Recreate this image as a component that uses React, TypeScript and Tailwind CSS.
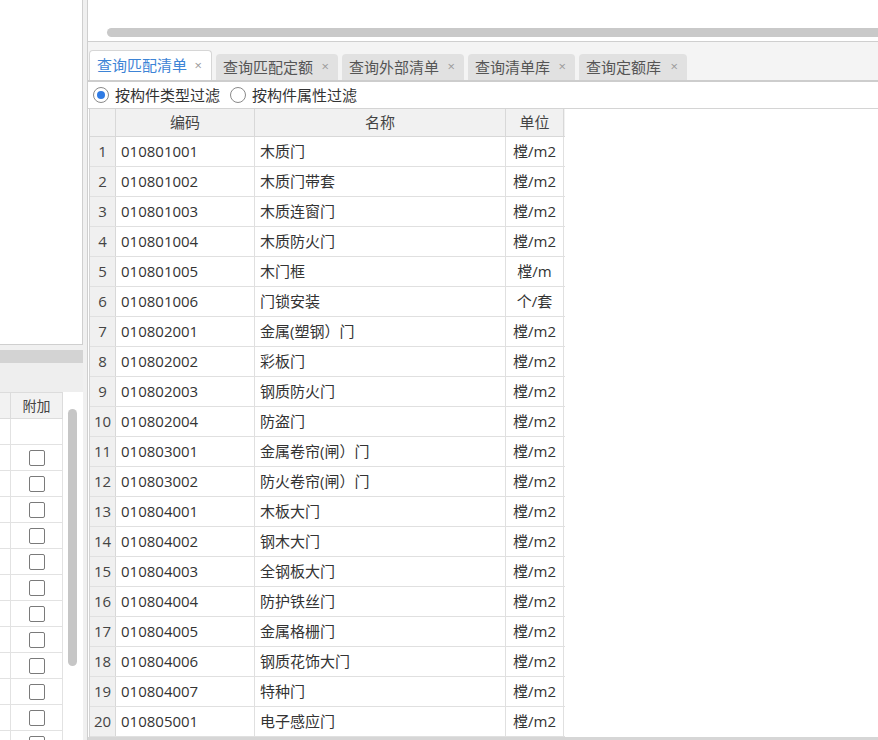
const rows: [string, string, string][] = [
  ["010801001", "木质门", "樘/m2"],
  ["010801002", "木质门带套", "樘/m2"],
  ["010801003", "木质连窗门", "樘/m2"],
  ["010801004", "木质防火门", "樘/m2"],
  ["010801005", "木门框", "樘/m"],
  ["010801006", "门锁安装", "个/套"],
  ["010802001", "金属(塑钢）门", "樘/m2"],
  ["010802002", "彩板门", "樘/m2"],
  ["010802003", "钢质防火门", "樘/m2"],
  ["010802004", "防盗门", "樘/m2"],
  ["010803001", "金属卷帘(闸）门", "樘/m2"],
  ["010803002", "防火卷帘(闸）门", "樘/m2"],
  ["010804001", "木板大门", "樘/m2"],
  ["010804002", "钢木大门", "樘/m2"],
  ["010804003", "全钢板大门", "樘/m2"],
  ["010804004", "防护铁丝门", "樘/m2"],
  ["010804005", "金属格栅门", "樘/m2"],
  ["010804006", "钢质花饰大门", "樘/m2"],
  ["010804007", "特种门", "樘/m2"],
  ["010805001", "电子感应门", "樘/m2"],
];

const tabs = [
  { label: "查询匹配清单", w: "w-[123px]", active: true },
  { label: "查询匹配定额", w: "w-[122px]" },
  { label: "查询外部清单", w: "w-[122px]" },
  { label: "查询清单库", w: "w-[107px]" },
  { label: "查询定额库", w: "w-[108px]" },
];

const LeftPanel = () => (
  <aside className="flex w-[83px] shrink-0 flex-col overflow-hidden">
    {/* upper empty pane */}
    <div className="h-[345px] shrink-0 border-r border-b border-[#cfcfcf] bg-white" />
    <div className="h-[5px] shrink-0" />
    <div className="h-[13px] shrink-0 bg-[#d3d3d3]" />
    <div className="h-[29px] shrink-0 bg-[#eeeeee]" />

    {/* 附加 column table */}
    <div className="flex min-h-0 flex-1 overflow-hidden bg-white">
      <div className="w-[63px]">
        <div className="flex h-[27px] border-y border-[#dcdcdc] bg-[#f2f2f2]">
          <div className="w-[11px] border-r border-[#dcdcdc]" />
          <div className="flex w-[52px] items-center justify-center border-r border-[#dcdcdc] text-[14px] text-[#444]">
            附加
          </div>
        </div>
        {Array.from({ length: 13 }).map((_, i) => (
          <div key={i} className="flex h-[26px] border-b border-[#e2e2e2]">
            <div className="w-[11px] border-r border-[#e2e2e2]" />
            <div className="flex w-[52px] items-center justify-center border-r border-[#e2e2e2]">
              {i > 0 && (
                <span className="h-[16px] w-[16px] rounded-[2px] border border-[#7a7a7a] bg-white" />
              )}
            </div>
          </div>
        ))}
      </div>
      <div className="flex-1 pt-[17px] pl-[5px]">
        <div className="h-[257px] w-[9px] rounded-full bg-[#c6c6c6]" />
      </div>
    </div>
  </aside>
);

const Radio = ({ checked, label }: { checked?: boolean; label: string }) => (
  <label className="flex items-center gap-[6px]">
    <span className="flex h-[16px] w-[16px] items-center justify-center rounded-full border border-[#8a8a8a] bg-white">
      {checked && <span className="h-[8px] w-[8px] rounded-full bg-[#2f7be4]" />}
    </span>
    <span>{label}</span>
  </label>
);

export default function App() {
  return (
    <div
      className="flex h-[740px] w-[878px] overflow-hidden bg-[#f0f0f0] text-[15px] text-[#333]"
      style={{ fontFamily: '"Open Sans", "Noto Sans CJK SC", sans-serif' }}
    >
      <LeftPanel />
      <div className="w-[4px] shrink-0" />

      <main className="flex min-w-0 flex-1 flex-col border-l border-[#cfcfcf]">
        {/* top pane with horizontal scrollbar */}
        <div className="h-[42px] shrink-0 border-b border-[#cfcfcf] bg-white pt-[28px] pl-[19px]">
          <div className="h-[9px] w-[900px] rounded-full bg-[#c9c9c9]" />
        </div>

        {/* tabs */}
        <div className="flex h-[40px] shrink-0 items-end gap-[4px] border-b-2 border-[#cdcdcd] bg-[#f4f4f4] pl-[1px]">
          {tabs.map((t) => (
            <div
              key={t.label}
              className={
                t.active
                  ? `flex h-[30px] ${t.w} items-center justify-between rounded-t-[4px] border border-b-0 border-[#d6d6d6] bg-white pr-[9px] pl-[7px] text-[#3d84d6]`
                  : `flex h-[26px] ${t.w} items-center justify-between rounded-t-[4px] bg-[#e1e1e1] pr-[9px] pl-[7px] text-[#555]`
              }
            >
              <span>{t.label}</span>
              <span className="text-[13px] text-[#9a9a9a]">×</span>
            </div>
          ))}
        </div>

        {/* filter radios */}
        <div className="flex h-[26px] shrink-0 items-center gap-[10px] bg-white pl-[5px]">
          <Radio checked label="按构件类型过滤" />
          <Radio label="按构件属性过滤" />
        </div>

        {/* result grid */}
        <div className="min-h-0 flex-1 overflow-hidden border-t border-[#d4d4d4] bg-white pl-[1px]">
          <div className="w-[476px] border-l border-[#d4d4d4]">
            <div className="flex h-[28px] border-b border-[#d8d8d8] bg-[#f1f1f1] text-[#444]">
              <div className="w-[26px] border-r border-[#d8d8d8]" />
              <div className="flex w-[139px] items-center justify-center border-r border-[#d8d8d8]">编码</div>
              <div className="flex w-[251px] items-center justify-center border-r border-[#d8d8d8]">名称</div>
              <div className="flex w-[58px] items-center justify-center border-r border-[#d8d8d8]">单位</div>
            </div>
            {rows.map(([code, name, unit], i) => (
              <div key={code} className="flex h-[30px] border-b border-[#e0e0e0]">
                <div className="flex w-[26px] items-center justify-center border-r border-[#d8d8d8] bg-[#f0f0f0] text-[#444]">
                  {i + 1}
                </div>
                <div className="flex w-[139px] items-center border-r border-[#e0e0e0] pl-[5px]">{code}</div>
                <div className="flex w-[251px] items-center border-r border-[#e0e0e0] pl-[5px]">{name}</div>
                <div className="flex w-[58px] items-center justify-center border-r border-[#e0e0e0]">{unit}</div>
              </div>
            ))}
          </div>
        </div>
        <div className="h-[3px] shrink-0 bg-[#d6d6d6]" />
      </main>
    </div>
  );
}
